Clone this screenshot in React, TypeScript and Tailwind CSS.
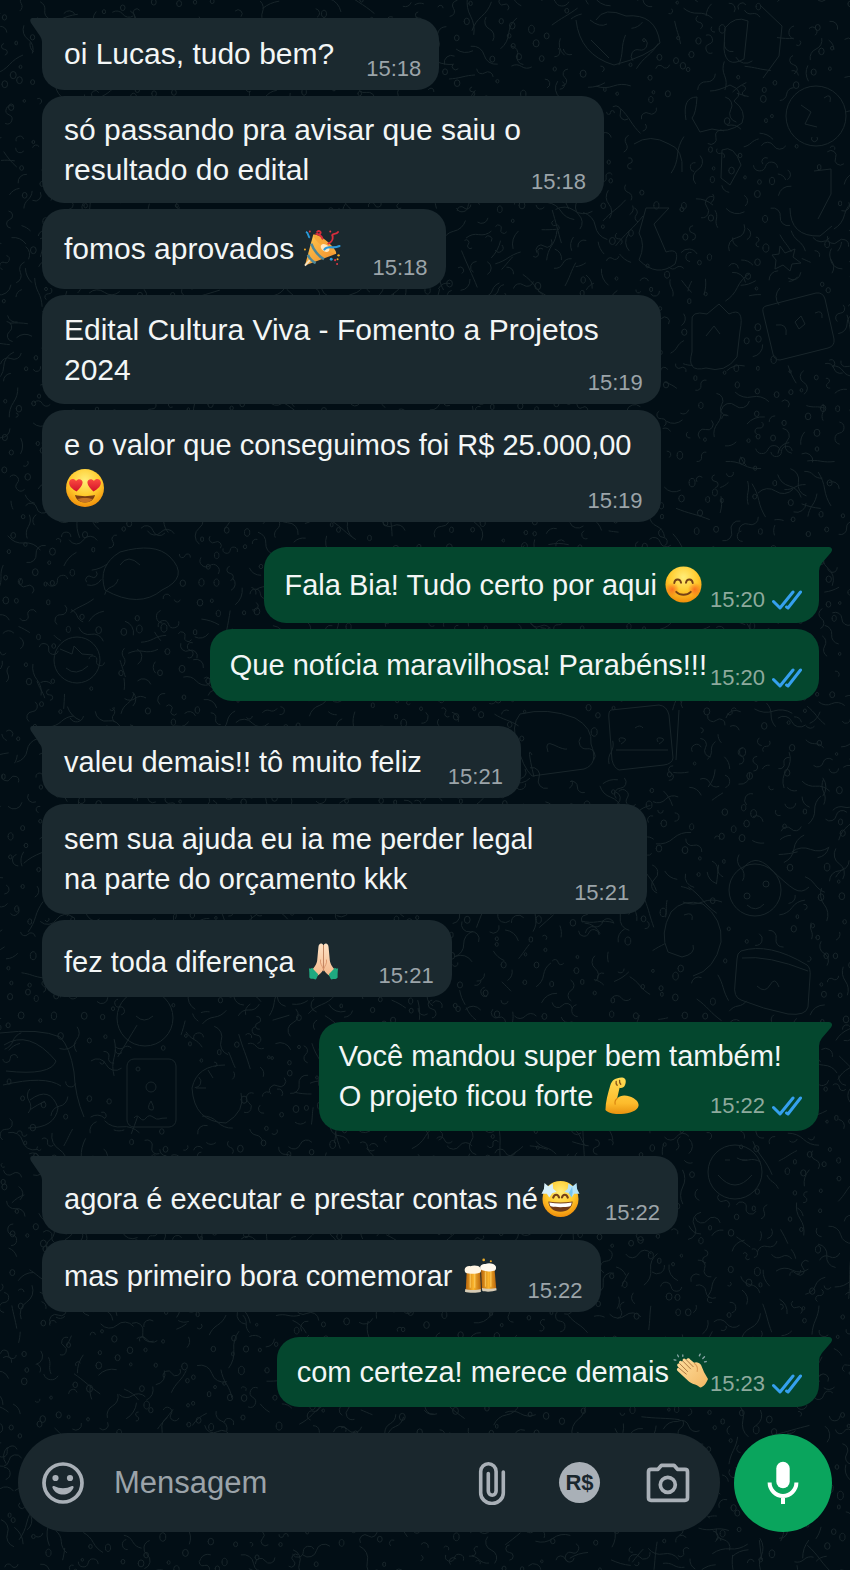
import type { ReactNode } from "react";

type EmojiName = "party" | "hearts" | "smile" | "pray" | "muscle" | "stars" | "beers" | "clap";

function Defs() {
  return (
    <svg className="absolute size-0" aria-hidden="true">
      <defs>
        <radialGradient id="face" cx="0.5" cy="0.3" r="0.72">
          <stop offset="0" stopColor="#ffee79" />
          <stop offset="0.55" stopColor="#ffca2c" />
          <stop offset="1" stopColor="#f08a08" />
        </radialGradient>
        <radialGradient id="cheek">
          <stop offset="0" stopColor="#f9581e" stopOpacity="0.75" />
          <stop offset="1" stopColor="#f9581e" stopOpacity="0" />
        </radialGradient>
        <linearGradient id="heart" x1="0" y1="0" x2="0" y2="1">
          <stop offset="0" stopColor="#fb4a3f" />
          <stop offset="1" stopColor="#d3122a" />
        </linearGradient>
        <linearGradient id="cone" x1="0" y1="0" x2="1" y2="1">
          <stop offset="0" stopColor="#ffc94f" />
          <stop offset="1" stopColor="#f08a2a" />
        </linearGradient>
        <linearGradient id="skin" x1="0" y1="0" x2="0" y2="1">
          <stop offset="0" stopColor="#ffe3c6" />
          <stop offset="1" stopColor="#f3b78a" />
        </linearGradient>
        <linearGradient id="arm" x1="0" y1="0" x2="0" y2="1">
          <stop offset="0" stopColor="#ffdc55" />
          <stop offset="0.7" stopColor="#fdbc2c" />
          <stop offset="1" stopColor="#e8920f" />
        </linearGradient>
        <linearGradient id="beer" x1="0" y1="0" x2="1" y2="0">
          <stop offset="0" stopColor="#b9660d" />
          <stop offset="0.5" stopColor="#fbb52c" />
          <stop offset="1" stopColor="#b9660d" />
        </linearGradient>
        <linearGradient id="clapping" x1="0" y1="0" x2="1" y2="1">
          <stop offset="0" stopColor="#ffdf9e" />
          <stop offset="1" stopColor="#f2b662" />
        </linearGradient>
      </defs>
    </svg>
  );
}

const drawings: Record<EmojiName, { label: string; art: ReactNode }> = {
  party: {
    label: "🎉",
    art: (
      <>
        <path d="M2 36.500 10.500 5C19 6 31 17 34 24.500z" fill="url(#cone)" />
        <path d="M10.500 5c4.500-3 25 14 23.500 19.500-3.500 1.500-25-15-23.500-19.500z" fill="#f6a738" />
        <ellipse cx="23" cy="18.500" rx="5" ry="3.500" fill="#ffe7c0" transform="rotate(38 23 18)" />
        <path d="M8.500 14c2 6 8 13.500 13 16M5 25.500c1.500 3.500 5 7 8 8.500" stroke="#4f8797" strokeWidth="2.600" fill="none" />
        <path d="M2 36.500 7 31" stroke="#f4e3c6" strokeWidth="2" />
        <path d="M22 20c3-5 8 0 15.500-3.500" stroke="#2998d8" strokeWidth="2.200" fill="none" strokeLinecap="round" />
        <path d="M26 14c3-1.500 5-3 4.500-8M14.500 2c2-2 5 0 3 2s-2-1-3.500 0c2 1 5 1 6 5M30 6c-.5-3 4-1 6-4" stroke="#d82d3c" strokeWidth="1.900" fill="none" strokeLinecap="round" />
        <path d="M3 2c3 1 2 4.500 4 6" stroke="#2998d8" strokeWidth="2" fill="none" />
        <g fill="#e33845"><circle cx="7" cy="1.500" r="1" /><circle cx="28" cy="1.500" r="1" /><circle cx="33" cy="31" r="1.100" /><circle cx="35" cy="35" r="1" /></g>
        <g fill="#f5aa27"><circle cx="2" cy="20" r="1" /><circle cx="36.500" cy="26" r="1.200" /><circle cx="35.500" cy="30" r="1" /></g>
        <circle cx="29" cy="30" r="1.500" fill="#2998d8" />
      </>
    ),
  },
  hearts: {
    label: "😍",
    art: (
      <>
        <circle cx="19" cy="19" r="19" fill="url(#face)" />
        <path d="M10.500 22.500C6 20 2.500 16.500 3.200 13c.6-3.500 5-4 6.800-1 2.500-3 6.800-1.600 6.600 1.800-.2 3.200-3.300 6.200-6.100 8.700zM27.500 22.500C32 20 35.500 16.500 34.800 13c-.6-3.500-5-4-6.800-1-2.500-3-6.800-1.600-6.600 1.800.2 3.200 3.300 6.200 6.100 8.700z" fill="url(#heart)" />
        <path d="M9 26c6 1.500 14 1.500 20 0-.8 4.500-4.500 7.500-10 7.500S9.800 30.500 9 26z" fill="#7c3f12" />
        <path d="M11.500 30c4-1.500 11-1.500 15 0-2 2.500-4.400 3.500-7.500 3.500s-5.500-1-7.500-3.500z" fill="#c67426" />
      </>
    ),
  },
  smile: {
    label: "😊",
    art: (
      <>
        <circle cx="19" cy="19" r="18.500" fill="url(#face)" />
        <circle cx="7.500" cy="24" r="7" fill="url(#cheek)" />
        <circle cx="30.500" cy="24" r="7" fill="url(#cheek)" />
        <path d="M9.500 17.500c.5-4.500 6-5 7-.3M21.500 17.200c1-4.700 6.500-4.200 7 .3M11.500 26.500c4 4 11 4 15 0" stroke="#754116" strokeWidth="1.900" fill="none" strokeLinecap="round" />
      </>
    ),
  },
  pray: {
    label: "🙏🏻",
    art: (
      <>
        <path d="M18.500 1.500c-2-2-4.500-.5-4.700 2.500L12.500 18c-.5 4.500-4 8-5.500 10l5 6c3-1.500 5-3.500 6.500-6z" fill="url(#skin)" />
        <path d="M19.500 1.500c2-2 4.500-.5 4.700 2.500L25.500 18c.5 4.500 4 8 5.500 10l-5 6c-3-1.500-5-3.500-6.500-6z" fill="url(#skin)" />
        <path d="M19 2v27M16 17c-1 4 1.500 6 3 10 1.500-4 4-6 3-10" stroke="#d9936a" strokeWidth="0.900" fill="none" />
        <path d="M4 26c1.500.8 2.500 0 3.500-.5 1 2 4.500 5 6 6.500-.8 2.500-1.200 4-2.500 5.500-2.500-1-4.500.5-6.500-2C4.500 32 4.500 29 4 26zM34 26c-1.500.8-2.500 0-3.500-.5-1 2-4.500 5-6 6.500.8 2.500 1.200 4 2.500 5.500 2.500-1 4.500.5 6.500-2C33.500 32 33.500 29 34 26z" fill="#1fa980" />
      </>
    ),
  },
  muscle: {
    label: "💪",
    art: (
      <>
        <path d="M1.500 34c0-8 2.500-17 5-25.500C8 3 12 1 18 .5c4-.5 5.500 3.500 3.500 8-1 2.500-3.500 3-5.500 2.500l-2.500 11c3.500-3.500 8-3.500 13-2 6 2 9.500 6 9 9.500-.8 5-9 8-18 8.500-7 .4-13-.5-16-4z" fill="url(#arm)" />
        <path d="M12.500 4.500c-.5 2 0 3 1 4M16 3.500c-.3 2 .3 3 1.200 4" stroke="#8c5718" strokeWidth="1.400" fill="none" strokeLinecap="round" />
        <path d="M13.500 22c-2 1.500-2.500 4-2 6" stroke="#d9850f" strokeWidth="1.200" fill="none" strokeLinecap="round" />
      </>
    ),
  },
  stars: {
    label: "🤩",
    art: (
      <>
        <circle cx="19" cy="19.500" r="18.500" fill="url(#face)" />
        <path d="M11.500 18c1.500-4 5-3.500 6 0M20.500 18c1-3.500 4.500-4 6 0" stroke="#754116" strokeWidth="2.200" fill="none" strokeLinecap="round" />
        <path d="M6.500 22c8 1.500 17 1.500 25 0-.5 6.500-5.500 10.500-12.500 10.500S7 28.500 6.500 22z" fill="#713b18" />
        <path d="M7.500 23c7.500 1.400 15.500 1.400 23 0-.3 2-.7 3-1.500 4-6 1.200-14 1.200-20 0-.8-1-1.200-2-1.500-4z" fill="#fff" />
        <path d="m2.500 3 4 3.500L11 3.500l.5 5.500 3.500 3-4.500 1.500-3 4.500-2.500-4-5.500 0 2.500-5z" fill="#d8f1fa" />
        <path d="m35.500 3-4 3.500L27 3.500 26.500 9 23 12l4.500 1.500 3 4.500 2.500-4 5.500 0-2.500-5z" fill="#b4e3f8" />
        <path d="m31 7 .5 5.500-1 5.500-3-4.500z" fill="#5fb9e8" opacity="0.700" />
      </>
    ),
  },
  beers: {
    label: "🍻",
    art: (
      <>
        <path d="M3 13h15l1 22H2z" fill="url(#beer)" />
        <path d="M19 10h15l2 23c-3 1.500-13 2-16 1z" fill="url(#beer)" />
        <path d="M7 16v16M12 16v16M24 14v17M30 14v17" stroke="#ffd36a" strokeWidth="1.400" opacity="0.700" />
        <path d="M1.500 33.500c4 1.500 13 1.500 17 0l.5 3c-4 1.700-14 1.700-18 0zM20 32.500c4 1 12 1 16 0l.5 2.500c-4 1.700-12 2-16 .8z" fill="#d7ccb6" />
        <path d="M1.500 15C-1 10 3 7.500 7 8c4-1.500 10-1 11.500 2 1.500 3 0 5.500-1.500 5.500-3 1.500-12 1.500-15.500-.5z" fill="#fff5e4" />
        <path d="M18.500 11.500C17 7 20 5.500 24 5.500c4-1.500 10-.5 11.500 2.500 1 3-.5 5-2 5-4 1.500-12 1-15-1.500z" fill="#fff9ef" />
        <g fill="#e9aa2b"><circle cx="22" cy="1" r="1.500" /><circle cx="30" cy="2.500" r="1.200" /></g>
      </>
    ),
  },
  clap: {
    label: "👏🏼",
    art: (
      <>
        <path d="M5 10c-1.500-2 1-4.500 3-2.500l1-.8C8 4.500 10.500 3 12 4.800l1.500.5c.5-2 3-2 4 0L22 9c2-1.500 6-.5 8 2.500l3.500 8.500 4.500 7.500c-2 5-5 9-9 10-4-4-10-4-13-7L3 18.500c-2-2.500 0-4.500 2-3L3 13c-1.500-2 .5-4 2-3z" fill="url(#clapping)" />
        <path d="m5.500 10 9 9M4.500 15l8.500 7M9 7l9 9M13 5.500l8 8" stroke="#a8733f" strokeWidth="1.100" fill="none" strokeLinecap="round" />
        <path d="M22 9.500c3 2 4.500 6 3.500 10" stroke="#dc9d55" strokeWidth="1.200" fill="none" />
        <path d="M-1 5.500 1 6M3 0l1 2M9 0v1.500M28 1l1-2M32 4l2-2M34 8l2-.5" stroke="#8ba7a9" strokeWidth="1.500" strokeLinecap="round" />
      </>
    ),
  },
};

function Emoji({ name, size = "size-[37px] align-[-8px]", className = "" }: { name: EmojiName; size?: string; className?: string }) {
  const { label, art } = drawings[name];
  return (
    <svg role="img" aria-label={label} viewBox="0 0 38 38" className={`inline-block overflow-visible ${size} ${className}`}>
      {art}
    </svg>
  );
}

type Message = { body: ReactNode; time: string; mine?: boolean; large?: boolean; box: string; meta: string };

const groups: Message[][] = [
  [
    { body: "oi Lucas, tudo bem?", time: "15:18", large: true, box: "min-h-[72px]", meta: "ml-[32px]" },
    { body: <>só passando pra avisar que saiu o<br />resultado do edital</>, time: "15:18", large: true, box: "min-h-[107px]", meta: "ml-[10px]" },
    { body: <>fomos aprovados <Emoji name="party" className="ml-[1px]" /></>, time: "15:18", large: true, box: "min-h-[80px]", meta: "ml-[32px]" },
    { body: <>Edital Cultura Viva - Fomento a Projetos<br />2024</>, time: "15:19", large: true, box: "min-h-[109px]", meta: "-ml-[11px]" },
    { body: <>e o valor que conseguimos foi R$ 25.000,00<br /><Emoji name="hearts" size="size-[38px] align-[-12px]" className="ml-[2px]" /></>, time: "15:19", box: "min-h-[112px]", meta: "-ml-[44px]" },
  ],
  [
    { body: <>Fala Bia! Tudo certo por aqui <Emoji name="smile" /></>, time: "15:20", mine: true, box: "min-h-[76px]", meta: "ml-[8px]" },
    { body: "Que notícia maravilhosa! Parabéns!!!", time: "15:20", mine: true, box: "min-h-[72px]", meta: "ml-[3px]" },
  ],
  [
    { body: "valeu demais!! tô muito feliz", time: "15:21", box: "min-h-[72px]", meta: "ml-[26px]" },
    { body: <>sem sua ajuda eu ia me perder legal<br />na parte do orçamento kkk</>, time: "15:21", box: "min-h-[110px]", meta: "ml-[41px]" },
    { body: <>fez toda diferença <Emoji name="pray" className="ml-[2px]" /></>, time: "15:21", box: "min-h-[77px] pt-[6px]", meta: "ml-[37px]" },
  ],
  [
    { body: <>Você mandou super bem também!<br />O projeto ficou forte <Emoji name="muscle" className="ml-[3px]" /></>, time: "15:22", mine: true, box: "min-h-[109px] pb-[2px]", meta: "-ml-[72px]" },
  ],
  [
    { body: <>agora é executar e prestar contas né<Emoji name="stars" className="ml-[4px]" /></>, time: "15:22", box: "min-h-[78px] pt-[8px]", meta: "ml-[26px]" },
    { body: <>mas primeiro bora comemorar <Emoji name="beers" size="size-[34px] align-[-7px]" className="ml-[4px]" /></>, time: "15:22", box: "min-h-[72px]", meta: "ml-[29px]" },
  ],
  [
    { body: <>com certeza! merece demais<Emoji name="clap" size="size-[33px] align-[-6px]" className="ml-[6px]" /></>, time: "15:23", mine: true, box: "min-h-[70px]", meta: "ml-[2px]" },
  ],
];

function Tail({ mine }: { mine?: boolean }) {
  return mine ? (
    <svg className="absolute top-0 left-full h-[24px] w-[13px] fill-[#04472e]" viewBox="0 0 13 24" aria-hidden="true">
      <path d="M0 0h10c3 0 4 3 2 5.500L3 16q-3 4-3 8z" />
    </svg>
  ) : (
    <svg className="absolute top-0 right-full h-[24px] w-[12px] fill-[#1b292f]" viewBox="0 0 12 24" aria-hidden="true">
      <path d="M12 0H2Q-1 1 1 5l9 13q2 3 2 6z" />
    </svg>
  );
}

function Ticks() {
  return (
    <svg role="img" aria-label="Lida" viewBox="0 0 30 20" className="h-[20px] w-[30px] fill-none stroke-[#35a0ee] stroke-[3px]">
      <path d="M1.500 11.500 8 18 21 2M14.500 17l1.500 1L28.500 2" strokeLinecap="round" strokeLinejoin="round" />
    </svg>
  );
}

function Bubble({ message, first }: { message: Message; first: boolean }) {
  const { mine, large, body, time, box, meta } = message;
  const tone = mine ? "self-end bg-[#04472e] pl-[20px] pr-[17px]" : "self-start bg-[#1b292f] pl-[22px] pr-[18px]";
  const corner = first ? (mine ? "rounded-tr-none" : "rounded-tl-none") : "";
  return (
    <li className={`relative flex max-w-full items-center rounded-[22px] ${tone} ${corner} ${box}`}>
      {first && <Tail mine={mine} />}
      <p className={`leading-[40px] text-[#f3f6f6] ${large ? "text-[30px]" : "text-[29px]"}`}>{body}</p>
      <span className={`flex shrink-0 items-center gap-[7px] self-end text-[22px] leading-[24px] ${meta} ${mine ? "pb-[11px] text-[#8eaa9d]" : "pb-[9px] text-[#9ba4a9]"}`}>
        <time>{time}</time>
        {mine && <Ticks />}
      </span>
    </li>
  );
}

const landmarks: [number, number, number][] = [
  [816, 116, 34], [800, 327, 38], [786, 258, 14], [152, 1092, 40], [755, 888, 32], [770, 983, 42],
  [645, 737, 38], [558, 744, 36], [692, 935, 34], [700, 108, 30], [600, 35, 28], [40, 1065, 34],
  [215, 1100, 26], [145, 1020, 30], [77, 660, 26], [140, 575, 36], [730, 1175, 30], [715, 335, 30],
  [660, 155, 28], [810, 200, 30], [660, 235, 24], [760, 45, 26],
];

function scribbles() {
  let seed = 91;
  const rnd = () => {
    seed = (seed * 16807) % 2147483647;
    return seed / 2147483647;
  };
  const f = (n: number) => n.toFixed(1);
  let d = "";
  for (let gy = 0; gy < 1570; gy += 16) {
    for (let gx = 0; gx < 850; gx += 16) {
      const x = gx + rnd() * 14;
      const y = gy + rnd() * 14;
      const kind = rnd();
      const s = 2 + rnd() * 3;
      const a = rnd() * 6.28;
      const turn = (rnd() - 0.5) * 3.2;
      if (landmarks.some(([cx, cy, r]) => Math.hypot(cx - x, cy - y) < r)) continue;
      if (kind < 0.34) {
        const r = s * 0.6;
        d += `M${f(x - r)} ${f(y)}a${f(r)} ${f(r * 1.2)} 0 1 0 ${f(r * 2)} 0a${f(r)} ${f(r * 1.2)} 0 1 0 ${f(-r * 2)} 0`;
      } else if (kind < 0.88) {
        d += `M${f(x)} ${f(y)}`;
        let angle = a;
        let bend = turn;
        const steps = kind < 0.6 ? 2 : 4;
        for (let i = 0; i < steps; i++) {
          const mx = Math.cos(angle) * s;
          const my = Math.sin(angle) * s;
          angle += bend;
          d += `q${f(mx)} ${f(my)} ${f(mx + Math.cos(angle) * s)} ${f(my + Math.sin(angle) * s)}`;
          if (i === 1) bend = -bend;
        }
      }
    }
  }
  return d;
}

const doodles = scribbles();

function Wallpaper() {
  return (
    <svg className="absolute inset-0 size-full fill-none stroke-[#18252a] stroke-1" viewBox="0 0 850 1570" preserveAspectRatio="xMidYMin slice" aria-hidden="true">
      <path d={doodles} strokeLinecap="round" />
      <g strokeLinejoin="round">
        <circle cx="816" cy="116" r="30" />
        <path d="M801 105l10 7-6 12 12 3M824 98q8-6 6 4M812 137a3 3 0 1 0 5 0" />
        <path d="m766 306 50-13q7-1 9 6l9 40q1 7-6 9l-48 12q-6 0-7-6l-10-42q-1-5 3-6z" />
        <path d="M776 325q12-2 10 10M795 322l6-6 4 8-6 5zM815 313q8-4 7 5" />
        <path d="m780 246 5 7 10-4-2 8 8 6-9 1-2 7-7-6-8 4 1-9-4-5 7-1z" />
        <rect x="127" y="1059" width="49" height="68" rx="7" />
        <circle cx="151" cy="1087" r="5" /><circle cx="138" cy="1069" r="2" />
        <path d="M151 1101q-5 8 0 9t0-9M134 1118q3-4 6 0t6 0 7-1 6 2 8-1" />
        <circle cx="755" cy="890" r="26" /><circle cx="747" cy="896" r="3" /><circle cx="766" cy="884" r="3" />
        <path d="M747 905q9 8 17-1M742 870q12-18 28-2t24 21q8 5 15-2" />
        <path d="M741 951q28-9 66 14 4 3 3 12l-2 30q-2 9-20 7-25-5-47-14-8-3-6-16l2-25q0-6 4-8zM742 958q26-3 66 13M757 986q8 8 13-1t9 2" />
        <path d="M611 710l48-5q8 1 10 10l4 43q-1 6-9 7l-45 5q-5-2-7-10l-3-40q-1-9 2-10zM616 750h52M679 710l-3 50" />
        <path d="M620 742q-3-5 3-4t-2 6M658 742q-3-5 3-4t-2 6M635 728q5-4 8 0" />
        <path d="M520 714q28-7 55 4 18 10 16 26 8 20-7 25l-52 7q-10-10-14-30-8-20 2-32zM532 755q-6-12 2 22M548 752q-4-12 6-7t13 4" />
        <path d="M671 912q12-14 32-8 20 15 18 38-6 28-28 34M671 912q-12 22-3 40l14 5q14-3 11-12M684 915q10-4 8 5" />
        <path d="M576 20q4 35 38 45 35-9 46-22-4-30-34-27-22-10-30 4M591 40l18 18M590 20q10 8 17 4" />
        <path d="M686 120q-4-23 11-23-1 17-5 21l8 14 12-3q16 5 30-6 5-12-8-22 12-10-4-16-12 6-20 6" />
        <path d="M0 1033q40-5 60 4 10 10 14 35 1 24 10 45M4 1045q25-16 52 16-5 15-50 10M3 1085q42-10 58 1M30 1100q20-15 28 8-3 20-30 20" />
        <path d="M225 1065q-28 0-33 23 2 34 34 35 20-12 15-30M208 1070l5 8M196 1088h10" />
        <circle cx="145" cy="1018" r="28" /><path d="M136 1016q8 8 17 0" />
        <circle cx="77" cy="660" r="23" /><path d="M60 649l12 5 2-8 8 8 11 1M66 668q10 9 22-2" />
        <path d="M105 590q-8-24 15-38 35-10 50 5 20 20-8 33-23 19-57 0zM120 565q8-12 20 0" />
        <circle cx="735" cy="1172" r="27" /><path d="M718 1175q17 20 34 0M725 1160h5M742 1160h5" />
        <path d="M692 322q-2-12 15-8l12-10 10 10q16-8 11 17l-3 26q-12 17-31 11-20 5-14-16zM706 336l8-10 6 8" />
        <path d="M634 144q16-11 35 0 15 5 13 28M722 150q12-6 19 15l-11 20-9-7zM790 208q0 29 30 28l12-10M814 171l17-2v25l-13 25" />
        <path d="M646 208h23l-15 16 12 28q15-5 9 12-18 14-36-4 7-15 0-27z" />
        <path d="m760 5 22 21-3 30-16 22M725 28q10-13 23-7l-4 38q-18 10-20-10z" />
      </g>
    </svg>
  );
}

const iconButton = "flex shrink-0 items-center justify-center text-[#a9b0b7]";

export default function App() {
  return (
    <div className="relative flex min-h-screen flex-col overflow-hidden bg-[#020e15] font-['Liberation_Sans',Arial,sans-serif]">
      <Defs />
      <Wallpaper />
      <main className="relative flex flex-1 flex-col gap-[25px] pt-[18px] pr-[31px] pl-[42px]">
        {groups.map((group, i) => (
          <ul key={i} className="flex flex-col gap-[6px]">
            {group.map((message, j) => (
              <Bubble key={j} message={message} first={j === 0} />
            ))}
          </ul>
        ))}
      </main>
      <form className="relative flex items-center gap-[14px] px-[18px] pt-[24px] pb-[38px]" onSubmit={(e) => e.preventDefault()}>
        <div className="flex h-[99px] min-w-0 flex-1 items-center rounded-full bg-[#1a272d] pr-[30px] pl-[24px]">
          <button type="button" aria-label="Emojis" className={iconButton}>
            <svg viewBox="0 0 42 42" className="size-[42px]" aria-hidden="true">
              <circle cx="21" cy="21" r="19" fill="none" stroke="currentColor" strokeWidth="3.700" />
              <circle cx="13.500" cy="16" r="3.100" fill="currentColor" />
              <circle cx="28" cy="16" r="3.100" fill="currentColor" />
              <path d="M12 24q9 4.500 18 0c1.500-.5 2 .8 1.300 2.200-4 8.500-16.600 8.500-20.600 0-.7-1.400-.2-2.700 1.300-2.200z" fill="currentColor" />
            </svg>
          </button>
          <input type="text" aria-label="Mensagem" placeholder="Mensagem" className="ml-[30px] h-[48px] min-w-0 flex-1 bg-transparent text-[31px] text-[#f3f6f6] outline-none placeholder:text-[#9ba3a9]" />
          <button type="button" aria-label="Anexar" className={iconButton}>
            <svg viewBox="0 0 28 44" className="h-[44px] w-[28px] fill-none stroke-current stroke-[3.600px]" aria-hidden="true">
              <path d="M25.300 11V32a11.300 10.500 0 0 1-22.600 0V10.500a7.700 7.700 0 0 1 15.400 0V30a3.900 4.200 0 0 1-7.800 0V12.500" strokeLinecap="round" />
            </svg>
          </button>
          <button type="button" aria-label="Pagamento" className={`${iconButton} ml-[53px]`}>
            <span className="flex size-[41px] items-center justify-center rounded-full bg-[#a9b0b7] text-[22px] leading-none font-bold text-[#1a272d]">R$</span>
          </button>
          <button type="button" aria-label="Câmera" className={`${iconButton} ml-[46px]`}>
            <svg viewBox="0 0 44 40" className="h-[40px] w-[44px] fill-none stroke-current stroke-[3.700px]" aria-hidden="true">
              <path d="M5 6.300h7l3.500-4h12.500l3.500 4H39q2.500 0 2.500 2.500v26q0 2.500-2.500 2.500H5q-2.500 0-2.500-2.500v-26Q2.500 6.300 5 6.300z" strokeLinejoin="round" />
              <circle cx="21.800" cy="21.800" r="7.500" />
            </svg>
          </button>
        </div>
        <button type="button" aria-label="Gravar áudio" className="flex size-[98px] shrink-0 items-center justify-center rounded-full bg-[#0aa55d] text-white">
          <svg viewBox="0 0 32 46" className="h-[46px] w-[32px]" aria-hidden="true">
            <rect x="9.300" y="1.700" width="13.400" height="26.600" rx="6.700" fill="currentColor" />
            <path d="M2.600 22.500a13.400 13.400 0 0 0 26.800 0M16 36v8" fill="none" stroke="currentColor" strokeWidth="4" />
          </svg>
        </button>
      </form>
    </div>
  );
}
